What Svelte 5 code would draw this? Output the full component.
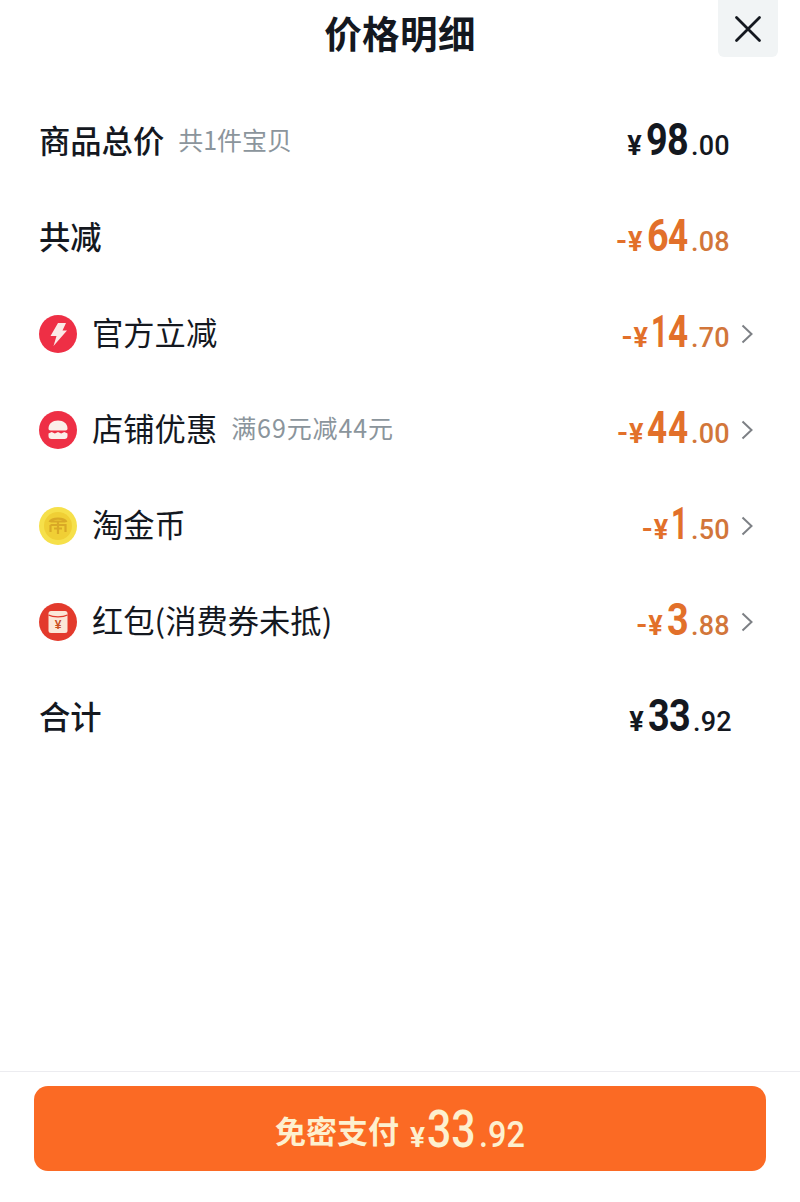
<script>
    const rows = [
        { label: '商品总价', note: '共1件宝贝', sign: '', int: '98', dec: '.00', head: true },
        { label: '共减', sign: '-', int: '64', dec: '.08', off: true, head: true },
        { icon: 'bolt', label: '官方立减', sign: '-', int: '14', dec: '.70', off: true, more: true },
        { icon: 'shop', label: '店铺优惠', note: '满69元减44元', wide: true, sign: '-', int: '44', dec: '.00', off: true, more: true },
        { icon: 'coin', label: '淘金币', sign: '-', int: '1', dec: '.50', off: true, more: true },
        { icon: 'packet', label: '红包(消费券未抵)', sign: '-', int: '3', dec: '.88', off: true, more: true },
        { label: '合计', sign: '', int: '33', dec: '.92', head: true, total: true }
    ];
</script>

<main>
    <header>
        <h1>价格明细</h1>
        <button class="close" aria-label="关闭">
            <svg width="28" height="28" viewBox="0 0 28 28"><path d="M2.5 2.5 L25.5 25.5 M25.5 2.5 L2.5 25.5" stroke="#14181f" stroke-width="2.8" stroke-linecap="round" fill="none"/></svg>
        </button>
    </header>

    <section class="list">
        {#each rows as r}
            <div class="row" class:total={r.total}>
                {#if r.icon === 'bolt'}
                    <svg class="icon" viewBox="0 0 38 38">
                        <circle cx="19" cy="19" r="19" fill="#ee2f45"/>
                        <path d="M19 8 H27 L23.5 15.5 H28 L14.5 31 L17.5 21 H11.5 Z" fill="#fbe9e6"/>
                    </svg>
                {:else if r.icon === 'shop'}
                    <svg class="icon" viewBox="0 0 38 38">
                        <circle cx="19" cy="19" r="19" fill="#ee2f45"/>
                        <path d="M9.5 17.5 C9.5 12.5 13.5 9.5 19 9.5 C24.5 9.5 28.5 12.5 28.5 17.5 C28.5 18.8 27.8 19.5 26.5 19.5 H11.5 C10.2 19.5 9.5 18.8 9.5 17.5 Z" fill="#fbeeea"/>
                        <path d="M9.5 22.5 L12.7 21 L15.9 22.5 L19 21 L22.1 22.5 L25.3 21 L28.5 22.5 V25 C28.5 26.8 27.3 28 25.5 28 H12.5 C10.7 28 9.5 26.8 9.5 25 Z" fill="#fbeeea"/>
                    </svg>
                {:else if r.icon === 'coin'}
                    <svg class="icon" viewBox="0 0 38 38">
                        <circle cx="19" cy="19" r="19" fill="#f6e04a"/>
                        <circle cx="19" cy="19" r="14" fill="#f0cf35"/>
                        <path d="M10.5 15 C13 10.5 25 10.5 27.5 15 M12 14.5 H26 M19 14.5 V27 M11.5 18 H26.5 V25 M11.5 18 V25 M15 21.5 H23" stroke="#d9a926" stroke-width="2.2" fill="none"/>
                    </svg>
                {:else if r.icon === 'packet'}
                    <svg class="icon" viewBox="0 0 38 38">
                        <circle cx="19" cy="19" r="19" fill="#e33a2c"/>
                        <rect x="9.5" y="8" width="19" height="22" rx="2.5" fill="#fbe7d8"/>
                        <path d="M9.5 12 C14 14.5 24 14.5 28.5 12" stroke="#e33a2c" stroke-width="1.4" fill="none"/>
                        <text x="19" y="26" class="yen-mark">¥</text>
                    </svg>
                {/if}
                <span class="label" class:head={r.head}>{r.label}</span>
                {#if r.note}<span class="note" class:wide={r.wide}>{r.note}</span>{/if}
                <span class="amount" class:off={r.off}>
                    {#if r.sign}<span class="sign">{r.sign}</span>{/if}<span class="yen">¥</span><span class="int">{#each r.int as d}<span class="digit" class:one={d === '1'} class:four={d === '4'}>{d}</span>{/each}</span><span class="dec">{r.dec}</span>
                </span>
                <span class="more">
                    {#if r.more}
                        <svg width="12" height="20" viewBox="0 0 12 20"><path d="M1.5 1.5 L10.5 10 L1.5 18.5" stroke="#7d8085" stroke-width="2" fill="none"/></svg>
                    {/if}
                </span>
            </div>
        {/each}
    </section>

    <footer>
        <button class="pay">
            <span class="pay-label">免密支付</span>
            <span class="pay-yen">¥</span><span class="pay-int">33</span><span class="pay-dec">.92</span>
        </button>
    </footer>
</main>

<style>
    :global(body) {
        margin: 0;
        background: #fff;
    }

    main {
        width: 800px;
        height: 1202px;
        display: flex;
        flex-direction: column;
        font-family: "Noto Sans CJK SC", "Noto Sans", sans-serif;
        color: #14181f;
    }

    header {
        height: 68px;
        box-sizing: border-box;
        position: relative;
        display: flex;
        justify-content: center;
        align-items: center;
        flex-shrink: 0;
        padding-bottom: 5px;
    }

    h1 {
        margin: 0;
        font-size: 37.5px;
        font-weight: 700;
        line-height: 1;
        letter-spacing: 0.4px;
    }

    .close {
        position: absolute;
        right: 22px;
        top: 0;
        width: 60px;
        height: 57px;
        border: 0;
        padding: 0;
        border-radius: 0 0 6px 6px;
        background: #f1f4f5;
        display: flex;
        align-items: center;
        justify-content: center;
    }

    .list {
        flex: 1;
        padding-top: 26px;
    }

    .row {
        height: 96px;
        display: flex;
        align-items: center;
        padding: 0 47px 0 39px;
    }

    .icon {
        width: 38px;
        height: 38px;
        margin-right: 15px;
        flex-shrink: 0;
    }

    .yen-mark {
        font-family: "Liberation Sans", sans-serif;
        font-size: 12px;
        font-weight: 700;
        fill: #c9501f;
        text-anchor: middle;
    }

    .label {
        font-size: 31.3px;
        line-height: 1;
        padding-bottom: 5px;
    }

    .label.head {
        font-weight: 500;
    }

    .note {
        font-size: 25px;
        color: #8b959c;
        margin-left: 14px;
        line-height: 1;
        padding-bottom: 5px;
    }

    .note.wide {
        letter-spacing: 0.9px;
    }

    .amount {
        margin-left: auto;
        display: flex;
        align-items: baseline;
        font-family: Roboto, "Liberation Sans", sans-serif;
        font-weight: 600;
        color: #14181f;
        padding-bottom: 5px;
    }

    .amount.off {
        color: #e2702a;
    }

    .sign {
        font-size: 30px;
        margin-right: 1px;
    }

    .yen {
        font-size: 27px;
        font-weight: 700;
        margin-right: 4px;
    }

    .int {
        font-size: 45px;
        font-weight: 700;
        margin-right: 3px;
    }

    .digit {
        display: inline-block;
        width: 0.47em;
        transform: scaleX(0.84);
        transform-origin: left;
    }

    .digit.one {
        width: 0.38em;
        margin-left: -0.03em;
        transform: scaleX(0.66);
    }

    .digit.four {
        width: 0.45em;
        transform: scaleX(0.78);
    }

    .dec {
        font-size: 27px;
        font-weight: 500;
        letter-spacing: 0.3px;
    }

    .amount.off .dec {
        color: #d2763a;
    }

    .more {
        width: 23px;
        display: flex;
        justify-content: flex-end;
        flex-shrink: 0;
    }

    .total .more {
        width: 21px;
    }

    footer {
        border-top: 1px solid #ececf0;
        height: 131px;
        padding: 14px 34px 0;
        box-sizing: border-box;
        flex-shrink: 0;
    }

    .pay {
        width: 100%;
        height: 85px;
        border: 0;
        border-radius: 14px;
        background: #fb6a24;
        color: #fdf0cf;
        display: flex;
        align-items: baseline;
        justify-content: center;
        font-family: Roboto, "Liberation Sans", sans-serif;
        font-weight: 500;
        padding: 14px 0 0;
        box-sizing: border-box;
    }

    .pay-label {
        font-family: "Noto Sans CJK SC", sans-serif;
        font-size: 31px;
        font-weight: 700;
        margin-right: 11px;
        transform: translateY(-4px);
    }

    .pay-yen {
        font-size: 28px;
        font-weight: 700;
        margin-right: 2px;
    }

    .pay-int {
        display: inline-block;
        font-size: 51px;
        width: 49px;
        transform: scaleX(0.84);
        transform-origin: left;
        margin-right: 3px;
    }

    .pay-dec {
        display: inline-block;
        font-size: 36px;
        width: 46px;
        transform: scaleX(0.9);
        transform-origin: left;
    }
</style>
